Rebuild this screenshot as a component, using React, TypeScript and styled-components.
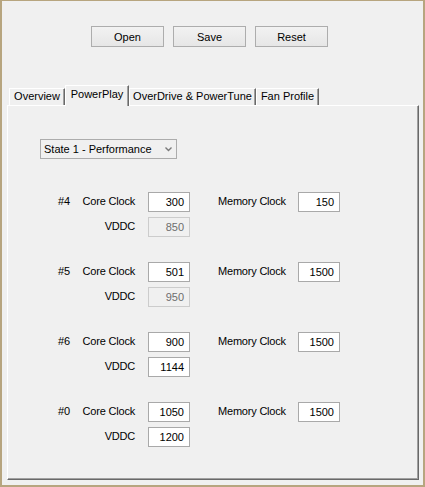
import React from "react";
import styled, { createGlobalStyle, css } from "styled-components";

const Global = createGlobalStyle`
  html, body {
    margin: 0;
    padding: 0;
    background: #f0f0f0;
  }
  * { box-sizing: border-box; }
`;

const FONT = `"Liberation Sans", Arial, sans-serif`;

const Window = styled.div`
  width: 425px;
  height: 487px;
  background: #f0f0f0;
  border-style: solid;
  border-color: #b7a57f;
  border-width: 1px 2px 2px 2px;
  padding: 25px 4px 5px 5px;
  display: flex;
  flex-direction: column;
  font-family: ${FONT};
  font-size: 11px;
  color: #000;
  white-space: nowrap;
`;

const ButtonBar = styled.div`
  display: flex;
  gap: 9px;
  padding-left: 84px;
`;

const PushButton = styled.button`
  width: 73px;
  height: 21px;
  padding: 0;
  border: 1px solid #adadad;
  background: linear-gradient(#f2f2f2, #e6e6e6);
  font-family: ${FONT};
  font-size: 11px;
  color: #000;
`;

const TabStrip = styled.div`
  display: flex;
  align-items: flex-end;
  margin-top: 38px;
  padding-left: 2px;
  height: 20px;
  position: relative;
  z-index: 1;
`;

const Tab = styled.div<{ $w: number; $active?: boolean }>`
  width: ${(p) => p.$w}px;
  height: 17px;
  display: flex;
  align-items: center;
  justify-content: center;
  background: #f0f0f0;
  border-top: 1px solid #fff;
  border-left: 1px solid #fff;
  border-right: 1px solid #696969;
  box-shadow: inset -1px 0 0 #a0a0a0;
  padding-bottom: 3px;
  ${(p) =>
    p.$active &&
    css`
      height: 21px;
      margin-bottom: -1px;
      padding-bottom: 5px;
    `}
`;

const Panel = styled.div`
  flex: 1;
  border-top: 1px solid #fff;
  border-left: 1px solid #fff;
  border-right: 1px solid #696969;
  border-bottom: 1px solid #696969;
  box-shadow: inset -1px -1px 0 #a0a0a0;
  padding: 33px 0 0 32px;
`;

const Select = styled.div`
  width: 137px;
  height: 20px;
  border: 1px solid #acacac;
  background: #f0f0f0;
  display: flex;
  align-items: center;
  justify-content: space-between;
  padding: 0 4px 0 3px;
`;

const Chevron = () => (
  <svg width="7" height="5" viewBox="0 0 7 5">
    <path d="M0.5 0.5 L3.5 3.5 L6.5 0.5" fill="none" stroke="#7a7a7a" strokeWidth="1.4" />
  </svg>
);

const StateList = styled.div`
  display: flex;
  flex-direction: column;
  gap: 25px;
  margin-top: 33px;
  padding-left: 18px;
`;

const StateGrid = styled.div`
  display: grid;
  grid-template-columns: 24px 66px 42px 108px 42px;
  grid-auto-rows: 20px;
  row-gap: 5px;
  align-items: center;
`;

const Tag = styled.span`
  grid-column: 1;
  padding-bottom: 2px;
`;

const Label = styled.span<{ $col: number }>`
  grid-column: ${(p) => p.$col};
  padding-bottom: 2px;
  letter-spacing: -0.2px;
  ${(p) =>
    p.$col === 2
      ? css`
          text-align: right;
          padding-right: 13px;
        `
      : css`
          padding-left: 28px;
        `}
`;

const Field = styled.div<{ $col: number; $disabled?: boolean }>`
  grid-column: ${(p) => p.$col};
  height: 20px;
  border: 1px solid ${(p) => (p.$disabled ? "#cccccc" : "#a9a9a9")};
  background: ${(p) => (p.$disabled ? "#f0f0f0" : "#fff")};
  color: ${(p) => (p.$disabled ? "#6d6d6d" : "#000")};
  display: flex;
  align-items: center;
  justify-content: flex-end;
  padding-right: 5px;
`;

type PState = { id: string; core: string; mem: string; vddc: string; locked?: boolean };

const states: PState[] = [
  { id: "#4", core: "300", mem: "150", vddc: "850", locked: true },
  { id: "#5", core: "501", mem: "1500", vddc: "950", locked: true },
  { id: "#6", core: "900", mem: "1500", vddc: "1144" },
  { id: "#0", core: "1050", mem: "1500", vddc: "1200" },
];

const tabs = [
  { name: "Overview", w: 56 },
  { name: "PowerPlay", w: 64, active: true },
  { name: "OverDrive & PowerTune", w: 127 },
  { name: "Fan Profile", w: 63 },
];

export default function App() {
  return (
    <>
      <Global />
      <Window>
        <ButtonBar>
          <PushButton>Open</PushButton>
          <PushButton>Save</PushButton>
          <PushButton>Reset</PushButton>
        </ButtonBar>
        <TabStrip>
          {tabs.map((t) => (
            <Tab key={t.name} $w={t.w} $active={t.active}>
              {t.name}
            </Tab>
          ))}
        </TabStrip>
        <Panel>
          <Select>
            <span>State 1 - Performance</span>
            <Chevron />
          </Select>
          <StateList>
            {states.map((s) => (
              <StateGrid key={s.id}>
                <Tag>{s.id}</Tag>
                <Label $col={2}>Core Clock</Label>
                <Field $col={3}>{s.core}</Field>
                <Label $col={4}>Memory Clock</Label>
                <Field $col={5}>{s.mem}</Field>
                <Label $col={2}>VDDC</Label>
                <Field $col={3} $disabled={s.locked}>
                  {s.vddc}
                </Field>
              </StateGrid>
            ))}
          </StateList>
        </Panel>
      </Window>
    </>
  );
}
